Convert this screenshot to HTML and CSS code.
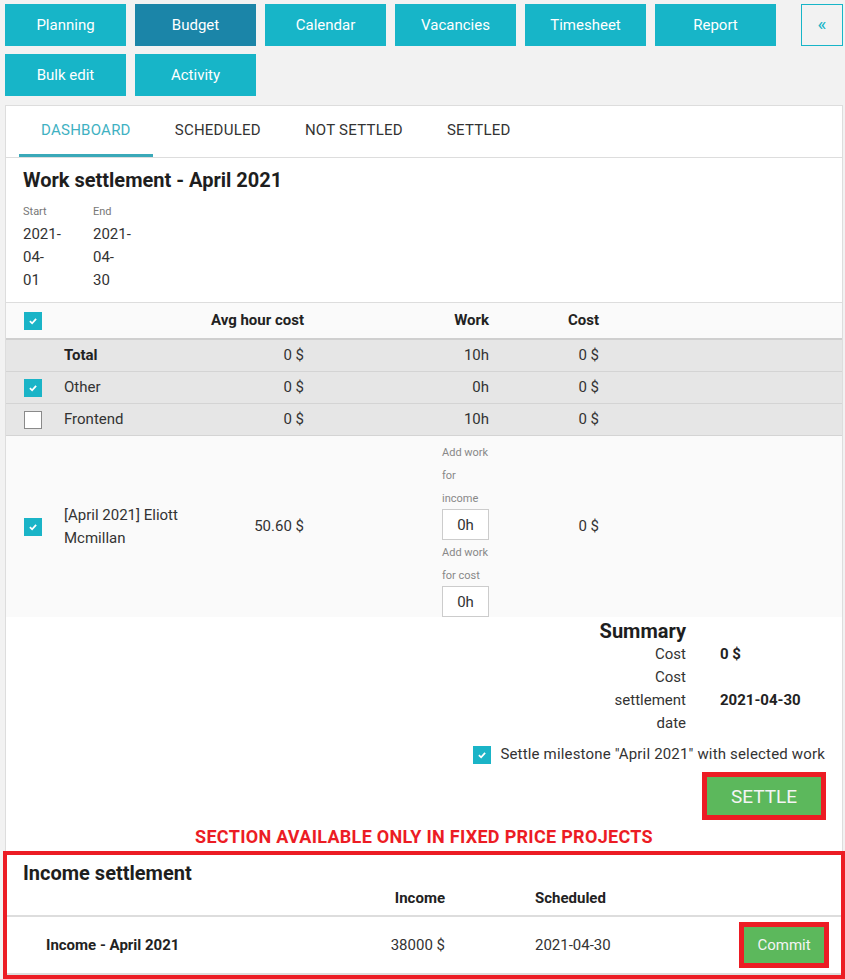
FILE: index.html
```html
<!DOCTYPE html>
<html lang="en">
    <head>
        <meta charset="UTF-8">
        <title>Budget - Work settlement</title>
        <link rel="stylesheet" href="styles.css">
    </head>
    <body>
        <div class="page">
            <div class="topbar">
                <div class="nav">
                    <a class="nav-btn">Planning</a>
                    <a class="nav-btn active">Budget</a>
                    <a class="nav-btn">Calendar</a>
                    <a class="nav-btn">Vacancies</a>
                    <a class="nav-btn">Timesheet</a>
                    <a class="nav-btn">Report</a>
                    <a class="nav-btn">Bulk edit</a>
                    <a class="nav-btn">Activity</a>
                </div>
                <a class="collapse-btn">&laquo;</a>
            </div>

            <div class="card">
                <div class="tabs">
                    <span class="tab active">DASHBOARD</span>
                    <span class="tab">SCHEDULED</span>
                    <span class="tab">NOT SETTLED</span>
                    <span class="tab">SETTLED</span>
                </div>

                <div class="section">
                    <h2 class="title">Work settlement - April 2021</h2>
                    <div class="dates">
                        <div class="date">
                            <div class="date-label">Start</div>
                            <div class="date-value">2021-<br>04-<br>01</div>
                        </div>
                        <div class="date">
                            <div class="date-label">End</div>
                            <div class="date-value">2021-<br>04-<br>30</div>
                        </div>
                    </div>
                </div>

                <table class="work-table">
                    <colgroup>
                        <col class="c-check">
                        <col class="c-name">
                        <col class="c-avg">
                        <col class="c-work">
                        <col class="c-cost">
                        <col>
                    </colgroup>
                    <thead>
                        <tr>
                            <th><span class="check on"><svg viewBox="0 0 18 18"><polyline points="5.5,9.2 8,11.6 12.5,6.6"/></svg></span></th>
                            <th></th>
                            <th class="num">Avg hour cost</th>
                            <th class="num">Work</th>
                            <th class="num">Cost</th>
                            <th></th>
                        </tr>
                    </thead>
                    <tbody>
                        <tr class="group">
                            <td></td>
                            <td class="bold">Total</td>
                            <td class="num">0 $</td>
                            <td class="num">10h</td>
                            <td class="num">0 $</td>
                            <td></td>
                        </tr>
                        <tr class="group">
                            <td><span class="check on"><svg viewBox="0 0 18 18"><polyline points="5.5,9.2 8,11.6 12.5,6.6"/></svg></span></td>
                            <td>Other</td>
                            <td class="num">0 $</td>
                            <td class="num">0h</td>
                            <td class="num">0 $</td>
                            <td></td>
                        </tr>
                        <tr class="group">
                            <td><span class="check"></span></td>
                            <td>Frontend</td>
                            <td class="num">0 $</td>
                            <td class="num">10h</td>
                            <td class="num">0 $</td>
                            <td></td>
                        </tr>
                        <tr class="person">
                            <td><span class="check on"><svg viewBox="0 0 18 18"><polyline points="5.5,9.2 8,11.6 12.5,6.6"/></svg></span></td>
                            <td>[April 2021] Eliott Mcmillan</td>
                            <td class="num">50.60 $</td>
                            <td class="num work-cell">
                                <div class="add-work">
                                    <div class="add-label">Add work for income</div>
                                    <input class="hours" type="text" value="0h">
                                    <div class="add-label">Add work for cost</div>
                                    <input class="hours" type="text" value="0h">
                                </div>
                            </td>
                            <td class="num">0 $</td>
                            <td></td>
                        </tr>
                    </tbody>
                </table>

                <div class="summary">
                    <div class="summary-grid">
                        <h3 class="summary-title">Summary</h3>
                        <span></span>
                        <div class="s-label">Cost</div>
                        <div class="s-value">0 $</div>
                        <div class="s-label">Cost settlement date</div>
                        <div class="s-value">2021-04-30</div>
                    </div>
                </div>

                <div class="milestone">
                    <span class="check on"><svg viewBox="0 0 18 18"><polyline points="5.5,9.2 8,11.6 12.5,6.6"/></svg></span>
                    <span>Settle milestone "April 2021" with selected work</span>
                </div>

                <div class="settle-row">
                    <button class="settle-btn marked">SETTLE</button>
                </div>

                <p class="note">SECTION AVAILABLE ONLY IN FIXED PRICE PROJECTS</p>

                <div class="income">
                    <h2 class="title income-title">Income settlement</h2>
                    <table class="income-table">
                        <colgroup>
                            <col class="i-name">
                            <col class="i-income">
                            <col class="i-sched">
                            <col>
                        </colgroup>
                        <thead>
                            <tr>
                                <th></th>
                                <th class="num">Income</th>
                                <th class="sched">Scheduled</th>
                                <th></th>
                            </tr>
                        </thead>
                        <tbody>
                            <tr>
                                <td class="i-title">Income - April 2021</td>
                                <td class="num">38000 $</td>
                                <td class="sched">2021-04-30</td>
                                <td class="action"><button class="commit-btn marked">Commit</button></td>
                            </tr>
                        </tbody>
                    </table>
                </div>
            </div>
        </div>
    </body>
</html>
```

FILE: styles.css
```css
body {
    margin: 0;
    background-color: #f2f2f2;
    font-family: Roboto, "Noto Sans", sans-serif;
    font-size: 15px;
    color: #222;
}
.page {
    padding: 4px 2px 0 5px;
}

/* top navigation */
.topbar {
    display: flex;
    gap: 9px;
}
.nav {
    flex: 1;
    display: flex;
    flex-wrap: wrap;
    gap: 8px 9px;
}
.nav-btn {
    width: 121px;
    height: 42px;
    display: flex;
    align-items: center;
    justify-content: center;
    background-color: #17b5c8;
    color: #fff;
    font-size: 15px;
}
.nav-btn.active {
    background-color: #1b85a8;
}
.collapse-btn {
    width: 42px;
    height: 42px;
    box-sizing: border-box;
    border: 1px solid #17b5c8;
    color: #17b5c8;
    display: flex;
    align-items: center;
    justify-content: center;
    font-size: 19px;
    padding-bottom: 3px;
}

/* card */
.card {
    margin-top: 9px;
    background-color: #fff;
    border: 1px solid #ddd;
}
.tabs {
    display: flex;
    padding-left: 13px;
    border-bottom: 1px solid #ddd;
}
.tab {
    padding: 0 22px;
    line-height: 48px;
    border-bottom: 3px solid transparent;
    color: #333;
    font-size: 15px;
    letter-spacing: 0.25px;
}
.tab.active {
    color: #3fb1c2;
    border-bottom-color: #3aa9b9;
}
.section {
    padding: 0 17px;
}
.title {
    margin: 10px 0 0;
    font-size: 20px;
    line-height: 24px;
    font-weight: bold;
    color: #1e1e1e;
}
.dates {
    display: flex;
    gap: 25px;
    margin-top: 13px;
}
.date {
    width: 45px;
}
.date-label {
    font-size: 11px;
    line-height: 14px;
    color: #777;
}
.date-value {
    margin-top: 4px;
    line-height: 23px;
    color: #333;
}

/* checkboxes */
.check {
    display: inline-block;
    width: 18px;
    height: 18px;
    box-sizing: border-box;
    border: 1px solid #8a8a8a;
    background-color: #fff;
    vertical-align: middle;
}
.check.on {
    border-color: #1ab4c7;
    background-color: #1ab4c7;
}
.check svg {
    display: block;
    width: 16px;
    height: 16px;
    fill: none;
    stroke: #fff;
    stroke-width: 2;
}

/* work table */
.work-table {
    width: 100%;
    margin-top: 10px;
    border-collapse: collapse;
    table-layout: fixed;
    border-top: 1px solid #ddd;
}
.c-check { width: 48px; }
.c-name { width: 140px; }
.c-avg { width: 120px; }
.c-work { width: 185px; }
.c-cost { width: 110px; }
.work-table th {
    background-color: #fafafa;
    padding: 6px 10px;
    line-height: 23px;
    text-align: left;
    font-weight: bold;
    color: #222;
    border-bottom: 2px solid #cfcfcf;
    white-space: nowrap;
}
.work-table td {
    padding: 4px 10px;
    line-height: 23px;
    color: #333;
}
.work-table th:first-child,
.work-table td:first-child {
    padding-left: 18px;
    padding-right: 0;
}
.work-table .num {
    text-align: right;
}
.work-table .bold {
    font-weight: bold;
    color: #222;
}
.group td {
    background-color: #e6e6e6;
    border-bottom: 1px solid #d4d4d4;
}
.person td {
    background-color: #fafafa;
}
.person .work-cell {
    padding: 4px 10px 0;
}
.add-work {
    display: inline-block;
    width: 47px;
    text-align: left;
    vertical-align: top;
}
.add-label {
    font-size: 11px;
    line-height: 23px;
    color: #888;
    position: relative;
    top: 1px;
}
.hours {
    display: block;
    width: 47px;
    height: 31px;
    box-sizing: border-box;
    margin: 0;
    padding: 0;
    border: 1px solid #ccc;
    background-color: #fff;
    font-family: Roboto, sans-serif;
    font-size: 15px;
    color: #333;
    text-align: center;
}

/* summary */
.summary {
    display: flex;
    justify-content: flex-end;
    padding-right: 18px;
}
.summary-grid {
    display: grid;
    grid-template-columns: 80px 104px;
    column-gap: 34px;
    line-height: 23px;
}
.summary-title {
    justify-self: end;
    margin: 2px 0 0;
    font-size: 20px;
    line-height: 24px;
    white-space: nowrap;
    color: #1e1e1e;
}
.s-label {
    text-align: right;
    color: #333;
}
.s-value {
    align-self: center;
    font-weight: bold;
    color: #222;
}
.milestone {
    display: flex;
    justify-content: flex-end;
    align-items: center;
    gap: 9px;
    margin-top: 8px;
    padding-right: 17px;
    line-height: 23px;
    letter-spacing: 0.17px;
    color: #333;
}
.settle-row {
    display: flex;
    justify-content: flex-end;
    margin-top: 6px;
    padding-right: 16px;
}
.marked {
    border: 5px solid #ec1c24;
    background-color: #5cb85c;
    color: #f4f4f4;
    font-family: Roboto, sans-serif;
    padding: 0;
    cursor: pointer;
}
.settle-btn {
    width: 124px;
    height: 48px;
    font-size: 19px;
}
.note {
    margin: 6px 0 3px;
    text-align: center;
    font-size: 18px;
    line-height: 22px;
    font-weight: bold;
    letter-spacing: 0.3px;
    color: #ec1c24;
}

/* income */
.income {
    margin: 0 -3px;
    border: 4px solid #ec1c24;
    background-color: #fff;
}
.income-title {
    margin: 0;
    padding: 6px 16px 0;
}
.income-table {
    width: 100%;
    border-collapse: collapse;
    table-layout: fixed;
}
.i-name { width: 300px; }
.i-income { width: 148px; }
.i-sched { width: 200px; }
.income-table th {
    padding: 2px 10px 5px;
    line-height: 23px;
    font-weight: bold;
    color: #222;
    border-bottom: 2px solid #ddd;
}
.income-table td {
    height: 56px;
    padding: 0 10px;
    color: #333;
    border-bottom: 2px solid #ddd;
}
.income-table .num {
    text-align: right;
}
.income-table .sched {
    text-align: left;
    padding-left: 80px;
}
.income-table .i-title {
    padding-left: 39px;
    font-weight: bold;
    color: #222;
}
.income-table .action {
    text-align: right;
    padding-right: 12px;
}
.commit-btn {
    width: 90px;
    height: 46px;
    font-size: 15px;
    vertical-align: middle;
}
```
